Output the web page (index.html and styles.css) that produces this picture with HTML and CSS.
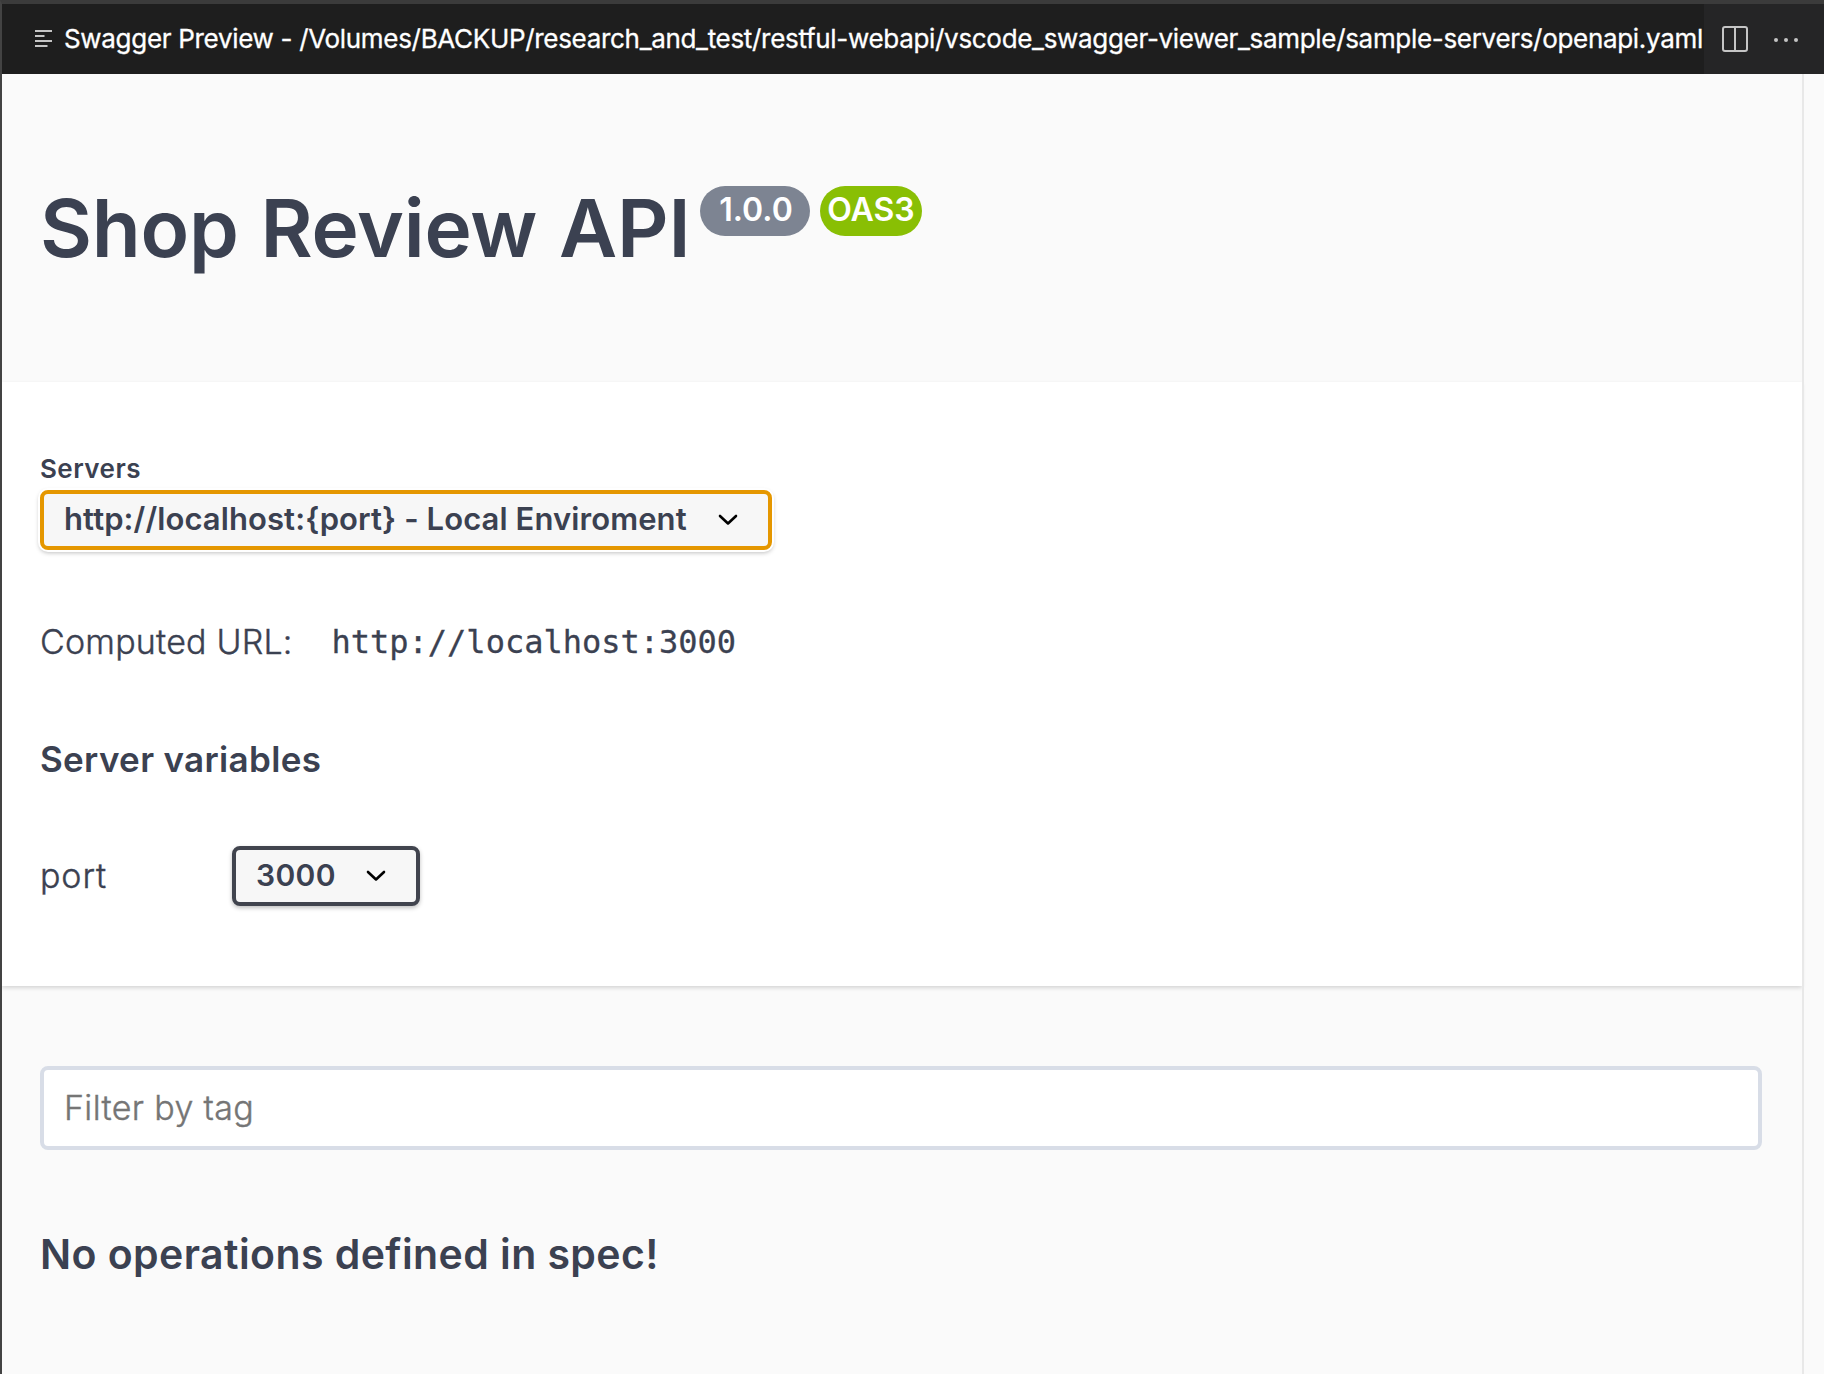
FILE: index.html
```html
<!DOCTYPE html>
<html lang="en">
<head>
<meta charset="utf-8">
<title>Swagger Preview</title>
<link rel="stylesheet" href="styles.css">
</head>
<body>
<div class="editor">
  <header class="tabbar">
    <div class="tab">
      <svg class="tab-icon" width="18" height="20" viewBox="0 0 18 20"><path d="M0 2h17M0 7h9.500M0 12h17M0 17h12.500" stroke="#c5c5c5" stroke-width="2" fill="none"/></svg>
      <span class="tab-title">Swagger Preview - /Volumes/BACKUP/research_and_test/restful-webapi/vscode_swagger-viewer_sample/sample-servers/openapi.yaml</span>
    </div>
    <div class="actions">
      <svg class="split-icon" width="26" height="26" viewBox="0 0 26 26"><path d="M3 1h20a2 2 0 0 1 2 2v20a2 2 0 0 1-2 2H3a2 2 0 0 1-2-2V3a2 2 0 0 1 2-2zM13 1v24" stroke="#c5c5c5" stroke-width="2" fill="none"/></svg>
      <svg class="more-icon" width="26" height="26" viewBox="0 0 26 26"><g fill="#c5c5c5"><circle cx="3" cy="14" r="2"/><circle cx="13" cy="14" r="2"/><circle cx="23" cy="14" r="2"/></g></svg>
    </div>
  </header>
  <div class="view">
    <main class="content">
      <section class="info">
        <h1 class="title">Shop Review API</h1>
        <span class="badge version">1.0.0</span>
        <span class="badge oas">OAS3</span>
      </section>
      <section class="scheme">
        <div class="servers-label">Servers</div>
        <div class="select server-select">
          <span class="server-value">http://localhost:{port} - Local Enviroment</span>
          <svg width="20" height="12" viewBox="0 0 20 12"><path d="M2 2l8 7.500 8-7.500" stroke="#000" stroke-width="2.600" fill="none" stroke-linecap="round" stroke-linejoin="round"/></svg>
        </div>
        <div class="computed"><span class="computed-label">Computed URL:</span><code class="url">http://localhost:3000</code></div>
        <h4 class="vars-title">Server variables</h4>
        <div class="var-row">
          <span class="var-name">port</span>
          <div class="select port-select">
            <span class="port-value">3000</span>
            <svg width="20" height="12" viewBox="0 0 20 12"><path d="M2 2l8 7.500 8-7.500" stroke="#000" stroke-width="2.600" fill="none" stroke-linecap="round" stroke-linejoin="round"/></svg>
          </div>
        </div>
      </section>
      <section class="ops">
        <div class="filter">Filter by tag</div>
        <h3 class="empty">No operations defined in spec!</h3>
      </section>
    </main>
    <div class="gutter"></div>
  </div>
</div>
</body>
</html>
```
FILE: styles.css
```css
* { box-sizing: border-box; }
body { margin: 0; background: #fafafa; color: #3b4151; font-family: Inter, "Liberation Sans", sans-serif; }
.editor { height: 1374px; display: flex; flex-direction: column; border-top: 4px solid #3b3b3b; border-left: 2px solid #434343; overflow: hidden; }
.tabbar { height: 70px; flex: none; display: flex; background: #1e1e1e; }
.tab { width: 1702px; padding-left: 33px; display: flex; align-items: center; gap: 11px; color: #fff; }
.tab-icon { flex: none; }
.tab-title { font-size: 26px; line-height: 36px; letter-spacing: -0.312px; white-space: nowrap; -webkit-text-stroke: .3px #fff; }
.actions { flex: 1; background: #252526; display: flex; align-items: center; padding-left: 18px; gap: 25px; }
.view { flex: 1; display: flex; min-height: 0; }
.content { width: 1800px; }
.gutter { flex: 1; border-left: 2px solid #e8e8e8; }
.info { height: 308px; padding: 112px 0 0 38px; display: flex; align-items: flex-start; white-space: nowrap; }
.title { margin: 0; width: 660px; font-size: 80px; line-height: 84px; font-weight: 600; word-spacing: 2px; letter-spacing: -.25px; }
.badge { height: 50px; border-radius: 25px; color: #fff; font-size: 32px; line-height: 48px; font-weight: 600; text-align: center; }
.version { width: 110px; padding-left: 2px; background: #7d8492; }
.oas { width: 102px; margin-left: 10px; background: #89bf04; }
.scheme { height: 604px; padding: 72px 38px 0; background: #fff; box-shadow: 0 2px 4px rgba(0,0,0,.15); }
.servers-label { height: 36px; font-size: 26px; line-height: 30px; font-weight: 600; letter-spacing: .45px; }
.select { height: 60px; border: 4px solid #41444e; border-radius: 8px; background: #f7f7f7; box-shadow: 0 2px 4px rgba(0,0,0,.25); display: flex; align-items: center; justify-content: space-between; padding: 0 30px 0 20px; font-size: 30px; line-height: 38px; font-weight: 600; white-space: nowrap; }
.select span { padding-bottom: 2px; }
.server-select { width: 732px; border-color: #e59700; box-shadow: 0 0 0 2px #fff, 0 2px 4px 1px rgba(0,0,0,.25); }
.server-value { font-size: 31px; letter-spacing: .09px; }
.port-value { letter-spacing: .35px; }
.computed { display: flex; align-items: flex-start; margin-top: 71px; height: 41px; font-size: 34px; line-height: 42px; font-weight: 300; letter-spacing: .2px; }
.computed-label { width: 291.500px; }
.computed-label, .var-name { -webkit-text-stroke: .4px #3b4151; }
.url { font: 32px/42px "DejaVu Sans Mono", monospace; letter-spacing: 0; -webkit-text-stroke: .3px #3b4151; }
.vars-title { margin: 77px 0 0; height: 40px; font-size: 35px; line-height: 40px; font-weight: 600; letter-spacing: .33px; }
.var-row { display: flex; align-items: center; margin-top: 67px; height: 60px; }
.var-name { width: 192px; padding-bottom: 2px; font-size: 34px; font-weight: 300; letter-spacing: .9px; }
.port-select { width: 188px; }
.ops { padding: 80px 40px 0 38px; }
.filter { height: 84px; border: 4px solid #d8dde7; border-radius: 8px; background: #fff; padding-left: 20px; font-size: 34px; line-height: 76px; color: #757575; font-weight: 300; letter-spacing: .35px; -webkit-text-stroke: .4px #757575; }
.empty { margin: 79px 0 0; font-size: 41px; line-height: 50px; font-weight: 600; letter-spacing: .42px; }
```
